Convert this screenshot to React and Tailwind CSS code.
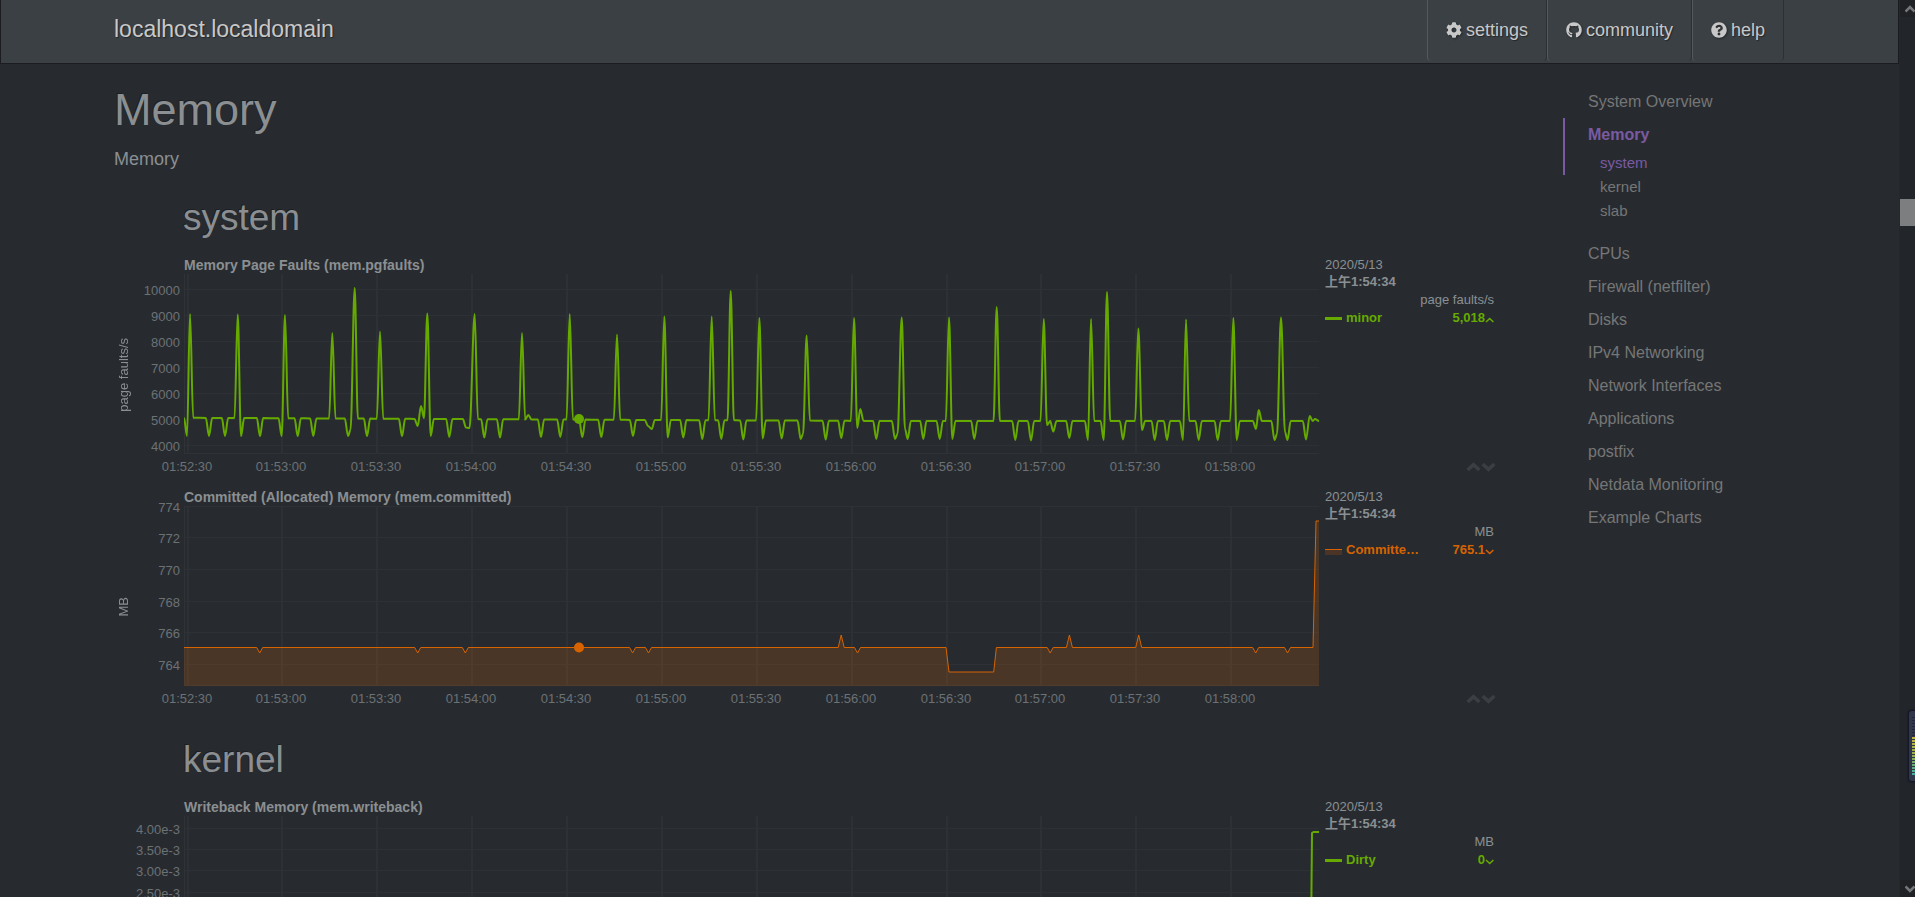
import React from "react";
import { FaCog, FaGithub, FaQuestionCircle } from "react-icons/fa";

const PLOT_W = 1135;
const PLOT_H = 180;

const TIMES = [
  ["01:52:30", 4],
  ["01:53:00", 98],
  ["01:53:30", 193],
  ["01:54:00", 288],
  ["01:54:30", 383],
  ["01:55:00", 478],
  ["01:55:30", 573],
  ["01:56:00", 668],
  ["01:56:30", 763],
  ["01:57:00", 857],
  ["01:57:30", 952],
  ["01:58:00", 1047],
];

// Each event is [x, y]: a spike or a dip one sample wide that leaves the baseline.
const FAULTS = [
  [3, 162], [6, 40], [25, 162], [41, 162], [53.7, 40.5], [57, 162], [76, 162], [97.7, 162], [101, 41],
  [113.7, 162], [129.3, 162], [148.3, 59], [164, 162], [166.5, 156], [170.7, 14], [183, 162], [196, 57.5],
  [218, 162], [233.7, 152], [237, 132], [240, 144], [243.3, 39.5], [246.7, 162], [265.3, 163], [282, 153.5], [285.5, 154],
  [290.7, 40], [300.3, 163.5], [316, 163.5], [338, 59], [344.3, 141], [357, 163], [376.3, 163], [385.7, 40],
  [398.3, 163], [417.3, 163], [433, 60.5], [449, 162], [464, 152], [467.7, 155], [480.3, 42.5], [483.7, 163.5], [499.3, 163.5],
  [518.3, 165], [527.7, 42.5], [537.3, 165], [546.7, 17], [559.3, 165.5], [575.3, 44], [578.7, 164.5],
  [597.7, 164.5], [616.7, 165], [619, 160], [622.7, 61.5], [641.7, 165.5], [657.3, 164], [670, 44], [673.3, 154],
  [676.3, 135], [692.3, 165], [711, 165], [713.5, 160], [717.7, 43.5], [721, 155], [723.7, 165], [739.3, 165], [755.7, 165],
  [765, 43.5], [768.3, 165], [790.3, 165], [812.7, 33], [831.3, 166], [847, 166.5], [859.7, 45],
  [863, 151], [869.3, 157.5], [885.3, 164], [904, 166], [907, 45], [919.7, 166], [923, 18], [939, 165.5],
  [954.3, 54.5], [958, 156], [970.7, 166], [983, 166], [999, 166], [1002, 45.5], [1014.7, 166],
  [1033.7, 166], [1049.3, 44], [1052.7, 166], [1072, 155], [1074.7, 136], [1090.5, 166], [1093, 160], [1097, 43.5],
  [1101, 158], [1103.5, 166], [1122, 165.5], [1125.7, 142], [1128.7, 147],
];

const COMMITTED = [
  [75.7, 147], [233.7, 147], [281.3, 147], [448.6, 147], [464.5, 147], [657.2, 129], [673.5, 147],
  "L762 141.5L765 166L809.7 166L812.4 141.5",
  [866.2, 147], [885.4, 129], [954.7, 129], [1071.7, 147], [1103.5, 147],
  "L1129 141.5L1132 15L1135 15",
];

function faultsPath() {
  const base = (x) => 143.8 + (x < 700 ? (x * 3.2) / 700 : 3.2);
  const points = [[0, 144]];
  FAULTS.forEach(([x, y], i) => {
    const prev = i ? FAULTS[i - 1][0] : 0;
    const next = i < FAULTS.length - 1 ? FAULTS[i + 1][0] : x;
    if (x - prev > 5.5) points.push([x - 3.2, base(x)]);
    points.push([x, y]);
    if (next - x > 5.5) points.push([x + 3.2, base(x)]);
  });
  points.push([1131, 145], [1135, 147]);
  return points.reduce((d, [x, y], i) => {
    if (i === 0) return `M${x} ${y}`;
    const [px, py] = points[i - 1];
    const t = (x - px) * 0.35;
    return `${d}C${(px + t).toFixed(2)} ${py.toFixed(1)} ${(x - t).toFixed(2)} ${y.toFixed(1)} ${x.toFixed(2)} ${y.toFixed(1)}`;
  }, "");
}

function committedPath() {
  return COMMITTED.reduce(
    (d, p) =>
      d + (typeof p === "string" ? p : `L${(p[0] - 3).toFixed(1)} 141.5L${p[0]} ${p[1]}L${(p[0] + 3).toFixed(1)} 141.5`),
    "M0 141.5"
  );
}

const CHARTS = {
  faults: {
    title: "Memory Page Faults (mem.pgfaults)",
    unit: "page faults/s",
    series: "minor",
    value: "5,018",
    up: true,
    text: "text-[#66aa00]",
    color: "#66aa00",
    width: 2,
    path: faultsPath(),
    dot: "M395 145h0.01",
    ticks: [["10000", 15], ["9000", 41], ["8000", 67], ["7000", 93], ["6000", 119], ["5000", 145], ["4000", 171]],
  },
  committed: {
    title: "Committed (Allocated) Memory (mem.committed)",
    unit: "MB",
    series: "Committed_AS",
    value: "765.1",
    up: false,
    area: true,
    text: "text-[#d66300]",
    color: "#d66300",
    width: 1,
    path: committedPath(),
    dot: "M395 141.5h0.01",
    ticks: [["774", 0], ["772", 31], ["770", 63], ["768", 95], ["766", 126], ["764", 158]],
  },
  writeback: {
    title: "Writeback Memory (mem.writeback)",
    unit: "MB",
    series: "Dirty",
    value: "0",
    up: false,
    text: "text-[#66aa00]",
    color: "#66aa00",
    width: 2,
    path: "M0 181L1126.5 181L1128 17L1129.5 16L1135 16",
    ticks: [["4.00e-3", 12], ["3.50e-3", 33], ["3.00e-3", 54], ["2.50e-3", 76], ["2.00e-3", 97], ["1.50e-3", 118]],
  },
};

function Caret({ up }) {
  return (
    <svg viewBox="0 0 9 6" className="mt-1 h-[6px] w-[9px]" fill="none" stroke="currentColor" strokeWidth="1.6">
      <path d={up ? "M1 5L4.7 1.5L8.4 5" : "M1 1L4.7 4.5L8.4 1"} />
    </svg>
  );
}

function Chevron({ up }) {
  return (
    <svg viewBox="0 0 15 10" className="h-[10px] w-[15px]" fill="none" stroke="currentColor" strokeWidth="3.6">
      <path d={up ? "M1.6 8L7.5 2.6L13.4 8" : "M1.6 2L7.5 7.4L13.4 2"} />
    </svg>
  );
}

function Chart({ c }) {
  return (
    <section className="flex h-[232px] pr-[7px] text-[13px]" aria-label={c.title}>
      <div className="flex w-[70px] shrink-0 pt-[17px]">
        <div className="flex h-[202px] w-5 items-center justify-center">
          <span className="rotate-180 whitespace-nowrap leading-5 text-[#8b8f92] [writing-mode:vertical-rl]">{c.unit}</span>
        </div>
        <div className="relative h-[180px] flex-1">
          {c.ticks.map(([label, y]) => (
            <span key={label} className="absolute right-1 -mt-[6px] leading-4 text-[#6c7174]" style={{ top: y }}>
              {label}
            </span>
          ))}
        </div>
      </div>

      <div className="flex min-w-0 flex-1 flex-col">
        <h3 className="h-[17px] whitespace-nowrap text-[14px] font-bold leading-4 text-[#8b8f92]">{c.title}</h3>
        <svg viewBox={`0 0 ${PLOT_W} ${PLOT_H}`} preserveAspectRatio="none" className="block h-[180px] w-full" fill="none">
          <g stroke="#2f3338" strokeWidth="1">
            {c.ticks.map(([label, y]) => (
              <path key={label} d={`M0 ${y + 0.5}H${PLOT_W}`} vectorEffect="non-scaling-stroke" stroke="#2d3136" />
            ))}
            <path d={`M0.5 0V${PLOT_H}M0 179.5H${PLOT_W}`} vectorEffect="non-scaling-stroke" />
            {TIMES.map(([t, x]) => (
              <path key={t} d={`M${x} 0V${PLOT_H}`} vectorEffect="non-scaling-stroke" strokeWidth="2" stroke="#2d3136" />
            ))}
          </g>
          {c.area && <path d={`${c.path}V${PLOT_H}H0Z`} fill={c.color} fillOpacity="0.2" />}
          <path d={c.path} stroke={c.color} strokeWidth={c.width} strokeLinejoin="round" vectorEffect="non-scaling-stroke" />
          {c.dot && (
            <path d={c.dot} stroke={c.color} strokeWidth="10" strokeLinecap="round" vectorEffect="non-scaling-stroke" />
          )}
        </svg>
        <div className="relative h-[22px]">
          {TIMES.map(([t, x]) => (
            <span
              key={t}
              className="absolute top-[5px] -translate-x-1/2 leading-4 text-[#6c7174]"
              style={{ left: `${((x - 1) / PLOT_W) * 100}%` }}
            >
              {t}
            </span>
          ))}
        </div>
      </div>

      <div className="flex w-[177px] shrink-0 flex-col pl-[6px] text-[#8b8f92]">
        <div className="leading-4">2020/5/13</div>
        <div className="font-bold leading-[18px]">上午1:54:34</div>
        <div className="pr-[2px] text-right leading-[18px]">{c.unit}</div>
        <div className={`flex items-center pr-[2px] font-bold leading-[18px] ${c.text}`}>
          {c.area ? (
            <span className="mt-1 h-[6px] w-[17px] border-t border-[#d66300] bg-[#4a3426]" />
          ) : (
            <span className="mt-px h-[3px] w-[17px] bg-[#66aa00]" />
          )}
          <span className="ml-1 w-[76px] truncate">{c.series}</span>
          <span className="ml-auto">{c.value}</span>
          <Caret up={c.up} />
        </div>
        <div className="mt-auto mb-[17px] flex justify-end text-[#3b3f44]">
          <button type="button" aria-label="Shrink chart">
            <Chevron up />
          </button>
          <button type="button" aria-label="Enlarge chart">
            <Chevron />
          </button>
        </div>
      </div>
    </section>
  );
}

function NavItem({ icon: Icon, label }) {
  return (
    <li>
      <a
        href={`#${label}`}
        className="flex h-[61px] items-center gap-1 rounded-b-[4px] border-r border-l border-r-[#2c3034] border-l-[#54595d] px-[18px] pb-[2px] text-[18px] leading-6 text-[#c8c8c8] [text-shadow:1px_1px_1px_rgba(0,0,0,0.4)]"
      >
        <Icon className="h-4 w-4 drop-shadow-[1px_1px_1px_rgba(0,0,0,0.4)]" />
        {label}
      </a>
    </li>
  );
}

const SECTIONS = [
  "CPUs",
  "Firewall (netfilter)",
  "Disks",
  "IPv4 Networking",
  "Network Interfaces",
  "Applications",
  "postfix",
  "Netdata Monitoring",
  "Example Charts",
];

function SideLink({ children, active }) {
  return (
    <li>
      <a
        href="#section"
        className={`block border-l-2 pl-[23px] text-[16px] leading-[33px] ${
          active ? "border-[#7a5aa2] font-bold text-[#7a5aa2]" : "border-transparent text-[#767676]"
        }`}
      >
        {children}
      </a>
    </li>
  );
}

function SubLink({ children, active }) {
  return (
    <li>
      <a
        href="#subsection"
        className={`block border-l-2 pl-[35px] text-[15px] leading-6 ${
          active ? "border-[#7a5aa2] text-[#7a5aa2]" : "border-transparent text-[#767676]"
        }`}
      >
        {children}
      </a>
    </li>
  );
}

const H2 = "my-[18px] pl-[69px] text-[37px] leading-[42px] text-[#8b8f92] [text-shadow:-1px_-1px_0_rgba(0,0,0,0.3)]";

export default function App() {
  return (
    <div className="relative flex h-screen overflow-hidden bg-[#272b30] font-['Liberation_Sans','Noto_Sans_CJK_SC',sans-serif] text-[#8b8f92]">
      <div className="flex min-w-0 flex-1 flex-col">
        <header className="flex h-16 shrink-0 items-start border-x border-b border-[#1a1c1f] bg-[#3b4044]">
          <a
            href="#top"
            className="pl-[113px] text-[23px] leading-[58px] text-[#c8c8c8] [text-shadow:1px_1px_1px_rgba(0,0,0,0.4)]"
          >
            localhost.localdomain
          </a>
          <ul className="mr-[114px] ml-auto flex">
            <NavItem icon={FaCog} label="settings" />
            <NavItem icon={FaGithub} label="community" />
            <NavItem icon={FaQuestionCircle} label="help" />
          </ul>
        </header>

        <div className="flex min-h-0 flex-1 overflow-y-auto pt-[21px] pl-[114px] [scrollbar-width:none]">
          <main className="min-w-0 flex-1">
            <h1 className="text-[45px] leading-[50px] [text-shadow:-1px_-1px_0_rgba(0,0,0,0.3)]">Memory</h1>
            <p className="mt-[11px] mb-[25px] text-[18px] leading-[26px]">Memory</p>
            <h2 className={`${H2} mt-0!`}>system</h2>
            <Chart c={CHARTS.faults} />
            <Chart c={CHARTS.committed} />
            <h2 className={H2}>kernel</h2>
            <Chart c={CHARTS.writeback} />
          </main>

          <nav className="ml-[60px] w-[336px] shrink-0" aria-label="Sections">
            <ul>
              <SideLink>System Overview</SideLink>
              <SideLink active>Memory</SideLink>
              <li className="mb-[14px]">
                <ul>
                  <SubLink active>system</SubLink>
                  <SubLink>kernel</SubLink>
                  <SubLink>slab</SubLink>
                </ul>
              </li>
              {SECTIONS.map((s) => (
                <SideLink key={s}>{s}</SideLink>
              ))}
            </ul>
          </nav>
        </div>
      </div>

      <div className="flex w-4 shrink-0 flex-col border-l border-[#24282c] bg-[#222529]">
        <div className="flex h-[17px] items-center justify-end bg-[#1f2125] text-[#75777a]">
          <svg viewBox="0 0 10 8" className="h-2 w-[10px]" fill="none" stroke="currentColor" strokeWidth="2.5">
            <path d="M0.5 6.5L5 2L9.5 6.5" />
          </svg>
        </div>
        <div className="mt-[182px] h-[27px] bg-[#7c7e80]" />
        <div className="mt-auto flex h-[17px] items-center justify-end bg-[#1f2125] text-[#75777a]">
          <svg viewBox="0 0 10 8" className="h-2 w-[10px]" fill="none" stroke="currentColor" strokeWidth="2.5">
            <path d="M0.5 1.5L5 6L9.5 1.5" />
          </svg>
        </div>
      </div>

      <div className="absolute top-[711px] right-0 flex h-[70px] w-[6px] flex-col rounded-l-[3px] bg-[#31364a] pt-[6px] pl-[3px] shadow-[0_0_2px_1px_#101426]">
        <div className="h-5 bg-[repeating-linear-gradient(#23273a_0_1px,#31364a_1px_3px)]" />
        <div className="h-[38px] bg-[repeating-linear-gradient(transparent_0_2px,#31364a_2px_3px),linear-gradient(#c4b43a,#8fae4e,#3fae9c)]" />
      </div>
    </div>
  );
}
